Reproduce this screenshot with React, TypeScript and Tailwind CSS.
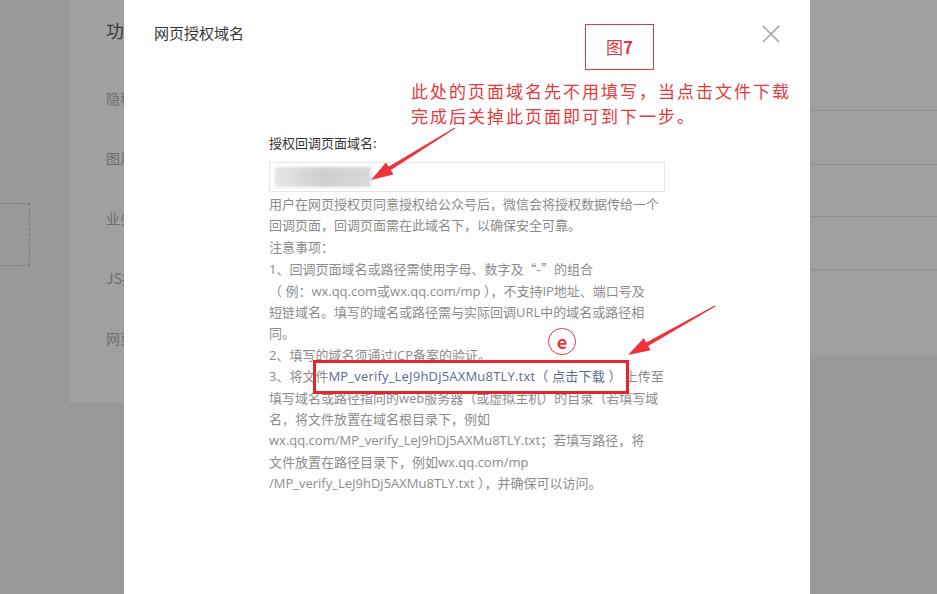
import React from 'react'

const font = { fontFamily: '"Noto Sans CJK SC", "Noto Sans", sans-serif' }
const helpFont = { fontFamily: '"Open Sans", "Noto Sans CJK SC", sans-serif' }

const rows = ['隐私协议', '图片水印', '业务域名', 'JS接口安全域名', '网页授权域名']

function Background() {
  return (
    <div className="flex h-full">
      {/* dashed upload box, cut off at the left edge */}
      <div className="w-[69px] shrink-0 pt-[203px]">
        <div className="-ml-[40px] h-[63px] w-[70px] border border-dashed border-[#7c7c7c]" />
      </div>
      <div className="flex flex-1 items-start">
        {/* only the strip left of the dialog is visible */}
        <div className="h-[403px] w-[741px] shrink-0 bg-[#a0a0a0] shadow-[0_0_2px_rgba(0,0,0,0.08)]">
          <div className="ml-[37px] w-[18px] overflow-hidden whitespace-nowrap pt-[19px]">
            <div className="text-[18px] leading-[22px] text-[#3b3b3b]">功能设置</div>
            <div className="mt-[47px] flex flex-col gap-[40px]">
              {rows.map((r) => (
                <div key={r} className="text-[14px] leading-[20px] text-[#6d6d6d]">
                  {r}
                </div>
              ))}
            </div>
          </div>
        </div>
        <div className="flex h-[355px] flex-1 flex-col bg-[#a0a0a0]">
          <div className="h-[111px] border-b border-[#8f8f8f]" />
          <div className="h-[54px] border-b border-[#8f8f8f]" />
          <div className="h-[52px] border-b border-[#8f8f8f]" />
          <div className="h-[53px] border-b border-[#8f8f8f]" />
        </div>
      </div>
    </div>
  )
}

const help = [
  '用户在网页授权页同意授权给公众号后，微信会将授权数据传给一个',
  '回调页面，回调页面需在此域名下，以确保安全可靠。',
  '注意事项：',
]

const helpMid = [
  '（ 例：wx.qq.com或wx.qq.com/mp ），不支持IP地址、端口号及',
  '短链域名。填写的域名或路径需与实际回调URL中的域名或路径相',
  '同。',
  '2、填写的域名须通过ICP备案的验证。',
]

const helpAfter = [
  '填写域名或路径指向的web服务器（或虚拟主机）的目录（若填写域',
  '名，将文件放置在域名根目录下，例如',
  'wx.qq.com/MP_verify_LeJ9hDj5AXMu8TLY.txt；若填写路径，将',
  '文件放置在路径目录下，例如wx.qq.com/mp',
  '/MP_verify_LeJ9hDj5AXMu8TLY.txt ），并确保可以访问。',
]

function Modal() {
  return (
    <div className="absolute left-[124px] top-0 h-[594px] w-[686px] bg-white">
      <div className="flex items-start justify-between pl-[30px] pr-[30px] pt-[23px]">
        <div className="text-[15px] leading-[20px] text-[#353535]">网页授权域名</div>
        <svg width="18" height="18" viewBox="0 0 18 18" className="mt-[2px]">
          <path d="M1 1 L17 17 M17 1 L1 17" stroke="#9a9a9a" strokeWidth="1.4" fill="none" />
        </svg>
      </div>

      <div className="ml-[145px] mt-[90px] w-[396px]">
        <div className="text-[13px] leading-[20px] text-[#353535]">授权回调页面域名:</div>
        <div className="mt-[9px] flex h-[30px] items-center border border-[#e7e7eb] pl-[5px]">
          <div className="h-[20px] w-[96px] bg-gradient-to-r from-[#e6e6e6] via-[#cfcfcf] to-[#d8d8d8] blur-[1.5px]" />
        </div>
        <div className="mt-[2px] text-[13px] leading-[21.4px] text-[#8c8c8c]" style={helpFont}>
          {help.map((l) => (
            <div key={l} className="whitespace-nowrap">{l}</div>
          ))}
          <div className="whitespace-nowrap">
            1、回调页面域名或路径需使用字母、数字及<span style={font}>“-”</span>的组合
          </div>
          {helpMid.map((l) => (
            <div key={l} className="whitespace-nowrap">{l}</div>
          ))}
          <div className="whitespace-nowrap">
            3、将文件
            <span className="tracking-[0.2px] text-[#576b95]">MP_verify_LeJ9hDj5AXMu8TLY.txt（ 点击下载 ）</span>
            <span className="ml-[3px]">上传至</span>
          </div>
          {helpAfter.map((l) => (
            <div key={l} className="whitespace-nowrap">{l}</div>
          ))}
        </div>
      </div>
    </div>
  )
}

function Annotations() {
  return (
    <>
      {/* 图7 label */}
      <div className="absolute left-[585px] top-[24px] flex h-[46px] w-[69px] items-center justify-center border border-[#e5383d] text-[17px] text-[#e5383d]">
        图<span className="font-bold">7</span>
      </div>

      <div className="absolute left-[411px] top-[78px] text-[17px] leading-[25px] tracking-[2px] text-[#e5383d]">
        <div>此处的页面域名先不用填写，当点击文件下载</div>
        <div>完成后关掉此页面即可到下一步。</div>
      </div>

      {/* circle e */}
      <div className="absolute left-[548px] top-[328px] flex h-[27px] w-[28px] items-center justify-center rounded-full border border-[#e5383d] pb-[2px] text-[18px] font-bold leading-none text-[#e5383d]">
        e
      </div>

      {/* red frame round the download link */}
      <div className="absolute left-[313px] top-[360px] h-[34px] w-[316px] border-[3px] border-[#e3262b]" />

      <svg className="pointer-events-none absolute left-0 top-0" width="937" height="594">
        <polygon
          points="455.3,128.4 390.8,170.1 393.4,174.4 371,180 386,162.5 388.6,166.7 454.7,127.6"
          fill="#ef3338"
        />
        <polygon
          points="715.3,306.4 648.2,345.9 650.6,350.3 628,355 643.8,338.1 646.2,342.5 714.7,305.6"
          fill="#ef3338"
        />
      </svg>
    </>
  )
}

export default function App() {
  return (
    <div className="relative h-[594px] w-[937px] overflow-hidden bg-[#989999]" style={font}>
      <Background />
      <Modal />
      <Annotations />
    </div>
  )
}
